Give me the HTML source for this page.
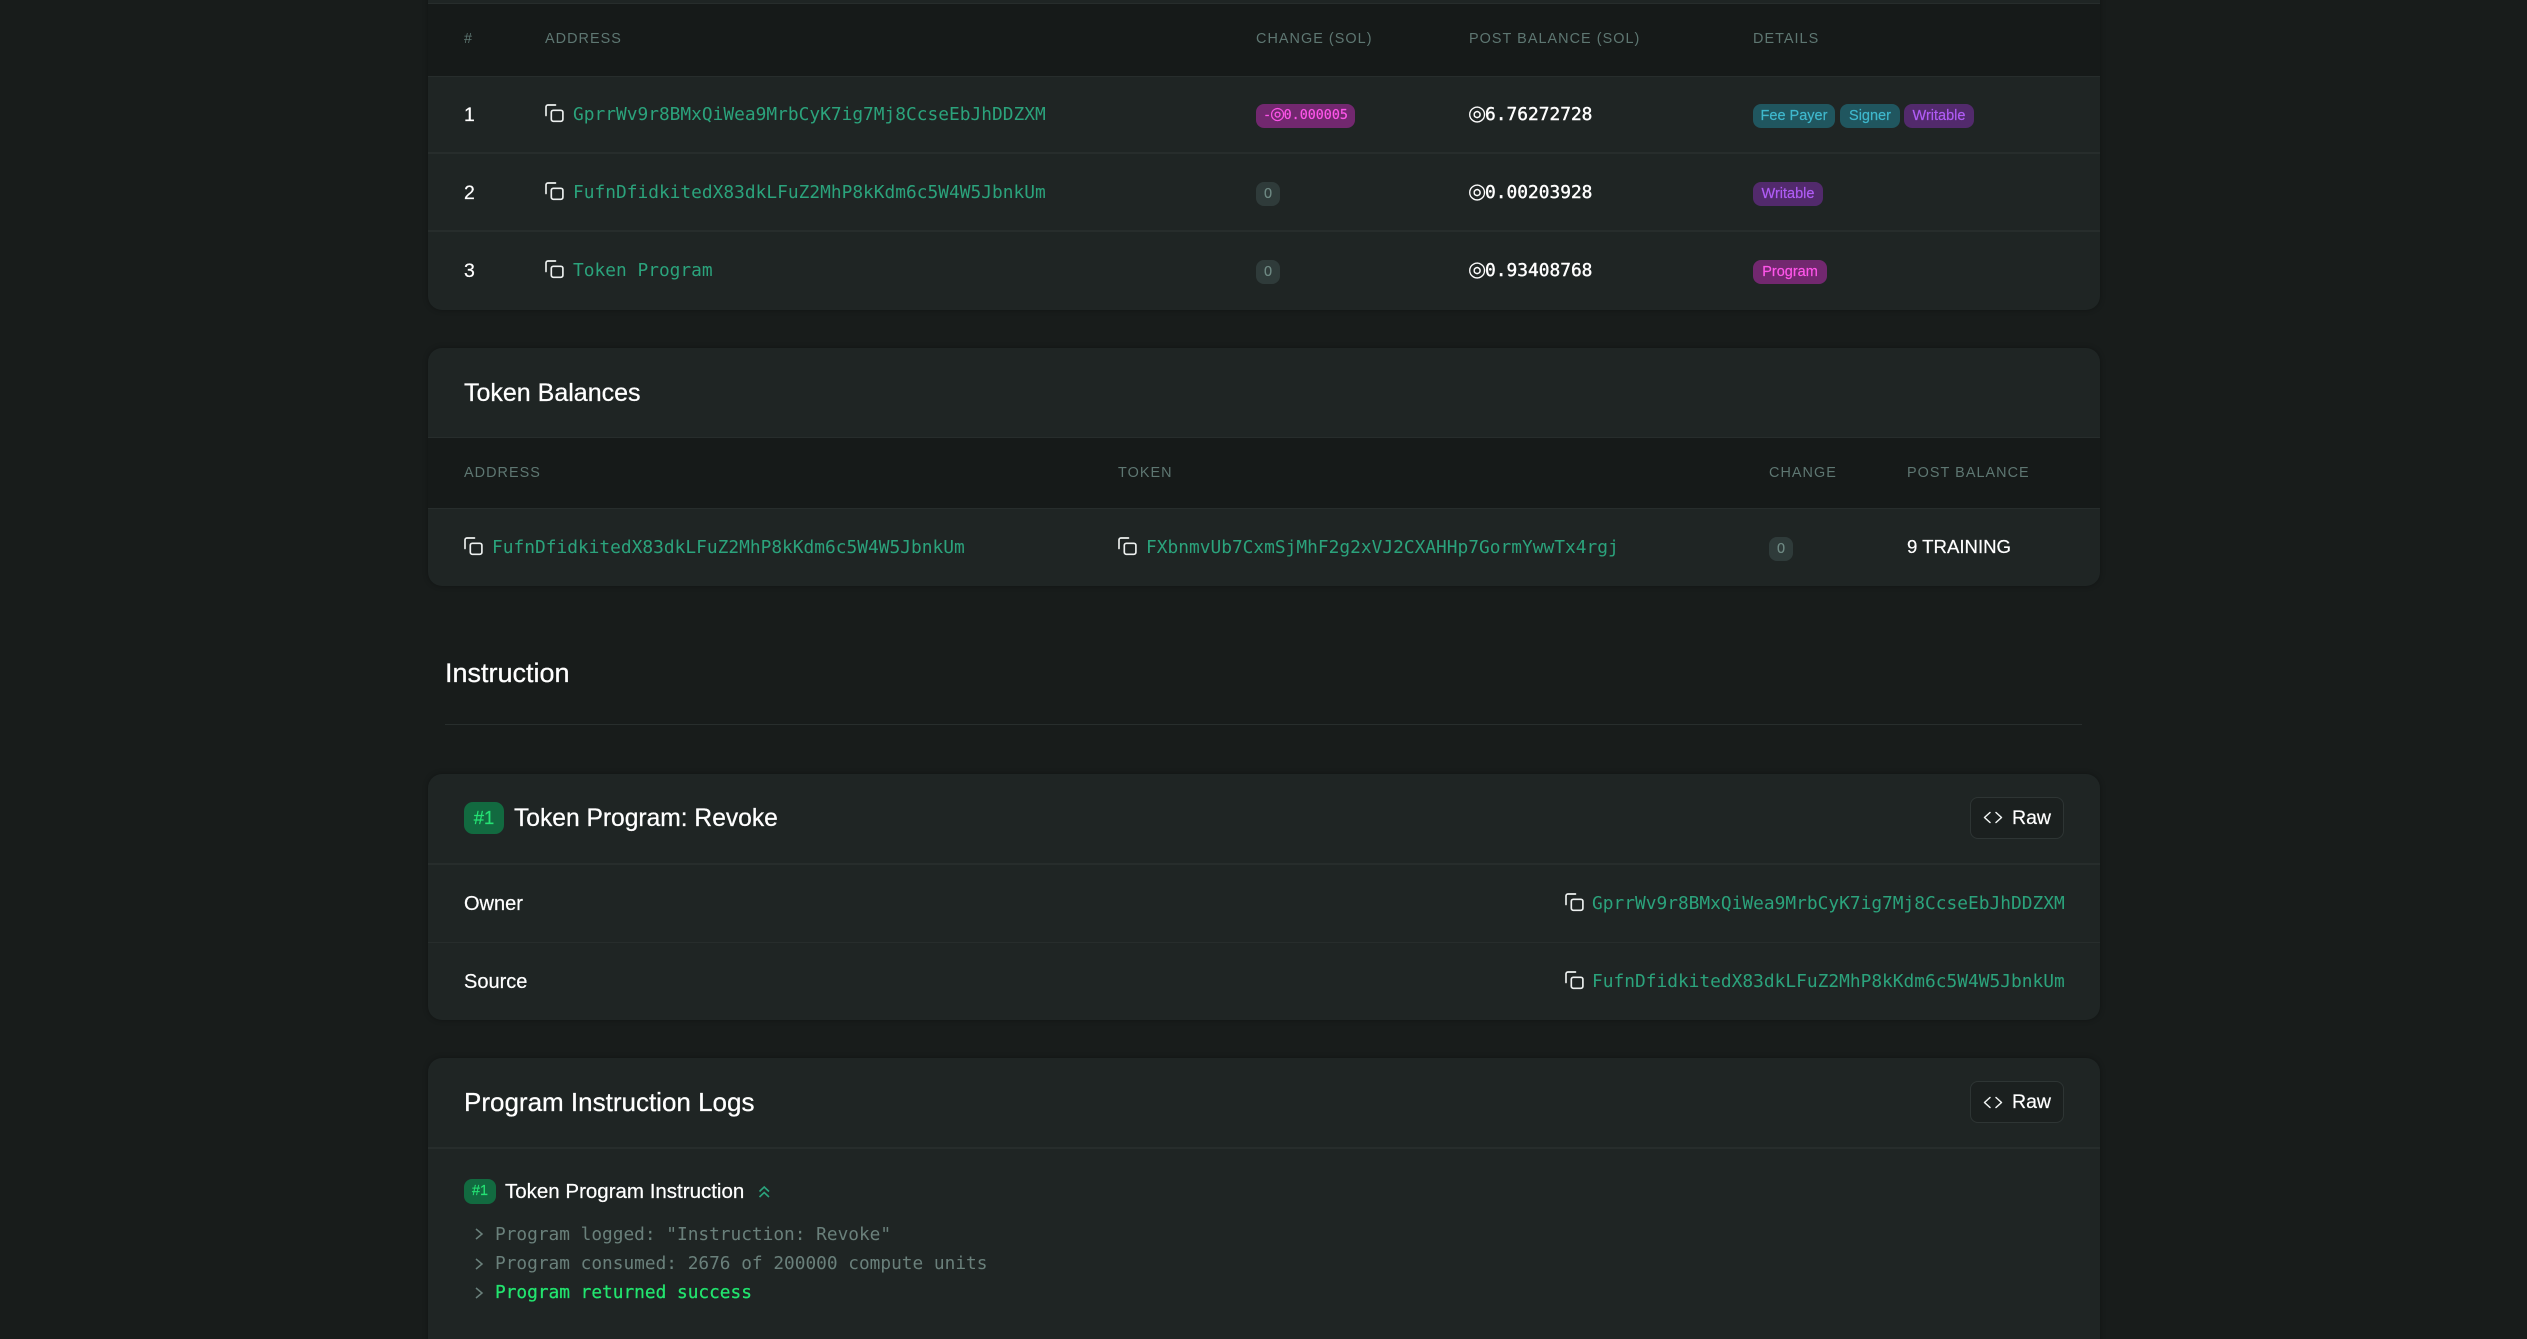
<!DOCTYPE html>
<html lang="en"><head><meta charset="utf-8"><title>Transaction</title>
<style>
html,body{margin:0;padding:0;background:#181c1b;width:2527px;height:1339px;overflow:hidden}
body{position:relative;font-family:"Liberation Sans",sans-serif;color:#fff}
.card{position:absolute;left:428px;width:1672px;background:#1f2524;border-radius:14px;box-shadow:0 0 6px rgba(0,0,0,.3);overflow:hidden}
.hd{position:absolute;left:0;width:1672px;background:#161a19;border-top:1.5px solid #272d2c;border-bottom:1.5px solid #272d2c;box-sizing:border-box}
.ln{position:absolute;left:0;width:1672px;height:1.5px;background:#272d2c}
.t{position:absolute;white-space:nowrap;line-height:30px;height:30px}
.th{font-size:14.4px;letter-spacing:1.05px;color:#5e7772}
.m{font-family:"DejaVu Sans Mono","Liberation Mono",monospace;font-size:17.85px}
.log2{font-size:17.8px}
.g{color:#2ba37c}
.b{-webkit-text-stroke:.4px #fff}
.h{font-size:25px;-webkit-text-stroke:.25px #fff}
.s{font-size:19.5px;-webkit-text-stroke:.2px #fff}
.sol{display:inline-block;width:16px;font-family:"DejaVu Sans",sans-serif;font-size:21px;line-height:1;text-align:left;margin-left:-1px;margin-right:1px;-webkit-text-stroke:.1px #fff}
.solp{display:inline-block;width:12.5px;font-family:"DejaVu Sans",sans-serif;font-size:17px;line-height:1;text-align:left;margin-left:-1px;margin-right:1px}
.p{position:absolute;height:24px;line-height:24px;border-radius:8px;text-align:center;font-size:14.5px;white-space:nowrap;-webkit-text-stroke:.2px currentColor}
.z{background:#2f3b3a;color:#6f8a84}
.tl{background:#20565f;color:#3fb8cd}
.pu{background:#522a6c;color:#b05cf5}
.pk{background:#72286f;color:#ff55ea}
.num{position:absolute;background:#126a40;color:#25e274;text-align:center;-webkit-text-stroke:.2px #25e274}
.btn{position:absolute;left:1970px;width:94px;height:42px;box-sizing:border-box;border:1.5px solid #2e3534;border-radius:8px;background:#1b201f}
svg{position:absolute;overflow:visible;fill:none}
.ci{stroke:#eef1f0;stroke-width:1.65;stroke-linecap:round;stroke-linejoin:round}
.ar{stroke:#f2f5f4;stroke-width:1.5;stroke-linecap:round;stroke-linejoin:round}
.log{color:#6a807b}
</style></head><body>

<svg width="0" height="0" style="position:absolute"><defs>
<symbol id="c" viewBox="0 0 19 18" overflow="visible"><path class="ci" d="M1 11.5V2.9C1 1.8 1.8 1 2.9 1H10.5"/><rect class="ci" x="6.3" y="6.3" width="11.6" height="11" rx="2"/></symbol>
</defs></svg>

<!-- Card 1 -->
<div class="card" style="top:-20px;height:330px">
  <div class="hd" style="top:23px;height:74px"></div>
  <div class="ln" style="top:172px"></div>
  <div class="ln" style="top:250px"></div>
</div>
<div class="t th" style="left:464px;top:24px">#</div>
<div class="t th" style="left:545px;top:24px">ADDRESS</div>
<div class="t th" style="left:1256px;top:24px">CHANGE (SOL)</div>
<div class="t th" style="left:1469px;top:24px">POST BALANCE (SOL)</div>
<div class="t th" style="left:1753px;top:24px">DETAILS</div>

<div class="t s" style="left:464px;top:100px">1</div>
<div class="t s" style="left:464px;top:178px">2</div>
<div class="t s" style="left:464px;top:256px">3</div>

<svg style="left:545px;top:104px" width="19" height="18"><use href="#c"/></svg>
<svg style="left:545px;top:182px" width="19" height="18"><use href="#c"/></svg>
<svg style="left:545px;top:260px" width="19" height="18"><use href="#c"/></svg>
<div class="t m g" style="left:573px;top:100px">GprrWv9r8BMxQiWea9MrbCyK7ig7Mj8CcseEbJhDDZXM</div>
<div class="t m g" style="left:573px;top:178px">FufnDfidkitedX83dkLFuZ2MhP8kKdm6c5W4W5JbnkUm</div>
<div class="t m g" style="left:573px;top:256px">Token Program</div>

<div class="p pk" style="left:1256px;top:104px;width:99px;font-family:'DejaVu Sans Mono',monospace;font-size:13.35px">-<span class="solp">◎</span>0.000005</div>
<div class="p z" style="left:1256px;top:182px;width:24px">0</div>
<div class="p z" style="left:1256px;top:260px;width:24px">0</div>

<div class="t m b" style="left:1469px;top:100px"><span class="sol">◎</span>6.76272728</div>
<div class="t m b" style="left:1469px;top:178px"><span class="sol">◎</span>0.00203928</div>
<div class="t m b" style="left:1469px;top:256px"><span class="sol">◎</span>0.93408768</div>

<div class="p tl" style="left:1753px;top:104px;width:82px">Fee Payer</div>
<div class="p tl" style="left:1840px;top:104px;width:60px">Signer</div>
<div class="p pu" style="left:1904px;top:104px;width:70px">Writable</div>
<div class="p pu" style="left:1753px;top:182px;width:70px">Writable</div>
<div class="p pk" style="left:1753px;top:260px;width:74px">Program</div>

<!-- Token balances -->
<div class="card" style="top:348px;height:238px">
  <div class="hd" style="top:89px;height:72px"></div>
</div>
<div class="t h" style="left:464px;top:378px">Token Balances</div>
<div class="t th" style="left:464px;top:458px">ADDRESS</div>
<div class="t th" style="left:1118px;top:458px">TOKEN</div>
<div class="t th" style="left:1769px;top:458px">CHANGE</div>
<div class="t th" style="left:1907px;top:458px">POST BALANCE</div>
<svg style="left:464px;top:537px" width="19" height="18"><use href="#c"/></svg>
<div class="t m g" style="left:492px;top:533px">FufnDfidkitedX83dkLFuZ2MhP8kKdm6c5W4W5JbnkUm</div>
<svg style="left:1118px;top:537px" width="19" height="18"><use href="#c"/></svg>
<div class="t m g" style="left:1146px;top:533px">FXbnmvUb7CxmSjMhF2g2xVJ2CXAHHp7GormYwwTx4rgj</div>
<div class="p z" style="left:1769px;top:537px;width:24px">0</div>
<div class="t s" style="left:1907px;top:532px;font-size:18.6px">9 TRAINING</div>

<!-- Instruction heading -->
<div class="t h" style="left:445px;top:658px;font-size:27px">Instruction</div>
<div style="position:absolute;left:445px;top:724px;width:1637px;height:1px;background:#282e2d"></div>

<!-- Instruction card -->
<div class="card" style="top:774px;height:246px">
  <div class="ln" style="top:89px"></div>
  <div class="ln" style="top:168px;height:1px"></div>
</div>
<div class="num" style="left:464px;top:802px;width:40px;height:32px;line-height:32px;border-radius:9px;font-size:18.5px">#1</div>
<div class="t h" style="left:514px;top:804px;font-size:24.6px">Token Program: Revoke</div>
<div class="btn" style="top:797px"></div>
<svg style="left:1984px;top:812px" width="18" height="11"><path class="ar" d="M6 .5L.5 5.500 6 10.500M12 .5l5.500 5-5.500 5"/></svg>
<div class="t s" style="left:2012px;top:803px">Raw</div>
<div class="t s" style="left:464px;top:889px;font-size:20px">Owner</div>
<div class="t s" style="left:464px;top:967px;font-size:20px">Source</div>
<svg style="left:1565px;top:893px" width="19" height="18"><use href="#c"/></svg>
<div class="t m g" style="left:1592px;top:889px">GprrWv9r8BMxQiWea9MrbCyK7ig7Mj8CcseEbJhDDZXM</div>
<svg style="left:1565px;top:971px" width="19" height="18"><use href="#c"/></svg>
<div class="t m g" style="left:1592px;top:967px">FufnDfidkitedX83dkLFuZ2MhP8kKdm6c5W4W5JbnkUm</div>

<!-- Logs card -->
<div class="card" style="top:1058px;height:300px">
  <div class="ln" style="top:89px"></div>
</div>
<div class="t h" style="left:464px;top:1087px;font-size:26px">Program Instruction Logs</div>
<div class="btn" style="top:1081px"></div>
<svg style="left:1984px;top:1097px" width="18" height="11"><path class="ar" d="M6 .5L.5 5.500 6 10.500M12 .5l5.500 5-5.500 5"/></svg>
<div class="t s" style="left:2012px;top:1087px">Raw</div>
<div class="num" style="left:464px;top:1179px;width:32px;height:25px;line-height:25px;border-radius:8px;font-size:14.4px">#1</div>
<div class="t s" style="left:505px;top:1177px;font-size:20.5px">Token Program Instruction</div>
<svg style="left:759px;top:1186px" width="11" height="12"><path d="M.5 5.500L5.200 1l4.800 4.500M.5 11L5.200 6.500 10 11" stroke="#2ba37c" stroke-width="1.6"/></svg>
<svg style="left:475px;top:1228px" width="9" height="12"><path d="M1 1l6 5-6 5" stroke="#6a807b" stroke-width="1.5"/></svg>
<svg style="left:475px;top:1258px" width="9" height="12"><path d="M1 1l6 5-6 5" stroke="#6a807b" stroke-width="1.5"/></svg>
<svg style="left:475px;top:1287px" width="9" height="12"><path d="M1 1l6 5-6 5" stroke="#6a807b" stroke-width="1.5"/></svg>
<div class="t m log log2" style="left:495px;top:1220px">Program logged: "Instruction: Revoke"</div>
<div class="t m log log2" style="left:495px;top:1249px">Program consumed: 2676 of 200000 compute units</div>
<div class="t m log2" style="left:495px;top:1278px;color:#22e56f;-webkit-text-stroke:.25px #22e56f">Program returned success</div>
</body></html>
